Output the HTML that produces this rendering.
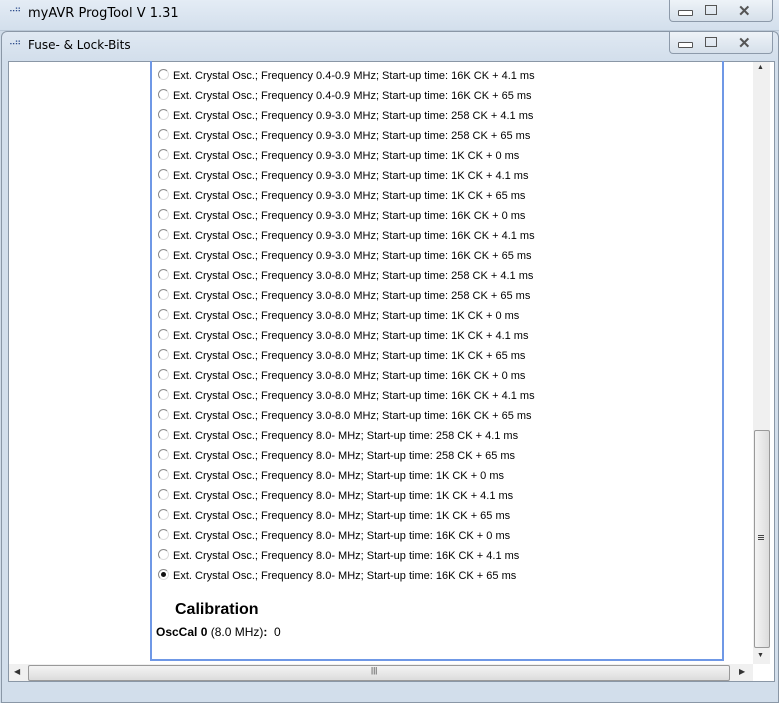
<!DOCTYPE html>
<html><head><style>
body{margin:0;width:779px;height:701px;overflow:hidden;background:#cfdbe8;font-family:"Liberation Sans",Arial,sans-serif;position:relative}
.t1{position:absolute;left:0;top:0;width:779px;height:30px;background:linear-gradient(#e4ecf5,#d3dfec);border-bottom:1px solid #b9c7d6}
.t2{position:absolute;left:1px;top:31px;width:776px;height:670px;background:linear-gradient(#dfe8f2 0,#d2deeb 30px,#d2deeb);border:1px solid #8a97a6;border-radius:6px 6px 0 0}
.title{position:absolute;font-size:13px;color:#000;font-family:"DejaVu Sans",sans-serif}
.btns{position:absolute;height:21px;border:1px solid #8d9aaa;border-top:none;border-radius:0 0 4px 4px;background:linear-gradient(#eef3f8,#d6e0ea)}
.client{position:absolute;left:8px;top:61px;width:767px;height:621px;background:#fff;border:1px solid #8a97a6;box-sizing:border-box}
.box{position:absolute;left:141px;top:-1px;width:574px;height:600px;border:2px solid #6f98e6;border-top:none;box-sizing:border-box}
.row{position:absolute;left:158px;font-size:11px;height:20px;line-height:20px;white-space:nowrap;color:#000}
.rad{display:inline-block;width:9px;height:9px;border-radius:50%;border:1px solid #8a8a8a;border-right-color:#ddd;border-bottom-color:#ddd;vertical-align:-1px;margin-right:4px;position:relative;background:#fff}
.rad.on::after{content:"";position:absolute;left:2px;top:2px;width:5px;height:5px;border-radius:50%;background:#111}
.vs{position:absolute;left:744px;top:0;width:17px;height:602px;background:#f0f0f0}
.hs{position:absolute;left:0;top:602px;width:744px;height:17px;background:#f0f0f0}
.g{position:absolute;left:5px;width:6px;height:1px;background:#444}
</style></head><body>
<div class="t1"></div>
<div class="title" style="left:9px;top:5px;font-size:9px;letter-spacing:-1px;color:#2a4a8a">⠤⠶</div>
<div class="title" style="left:28px;top:6px">myAVR ProgTool V 1.31</div>
<div class="btns" style="left:669px;top:0;width:102px"></div>
<div class="t2"></div>
<div class="title" style="left:9px;top:38px;font-size:9px;letter-spacing:-1px;color:#2a4a8a">⠤⠶</div>
<div class="title" style="left:28px;top:38px;font-size:12px">Fuse- &amp; Lock-Bits</div>
<div class="btns" style="left:669px;top:32px;width:102px"></div>
<div style="position:absolute;left:678px;top:10px;width:13px;height:4px;border:1px solid #555;border-radius:1px;background:#fff"></div>
<div style="position:absolute;left:705px;top:5px;width:10px;height:8px;border:1px solid #555;"></div>
<div style="position:absolute;left:738px;top:2px;font-size:15px;font-weight:bold;color:#555">✕</div>
<div style="position:absolute;left:678px;top:42px;width:13px;height:4px;border:1px solid #555;border-radius:1px;background:#fff"></div>
<div style="position:absolute;left:705px;top:37px;width:10px;height:8px;border:1px solid #555;"></div>
<div style="position:absolute;left:738px;top:34px;font-size:15px;font-weight:bold;color:#555">✕</div>
<div class="client">
<div class="box"></div>
<div class="vs"><div style="position:absolute;left:1px;top:368px;width:14px;height:216px;border:1px solid #999;border-radius:2px;background:linear-gradient(90deg,#f4f4f4,#dcdcdc)"></div>
<div class="g" style="top:473px"></div><div class="g" style="top:475px"></div><div class="g" style="top:477px"></div>
<div style="position:absolute;left:4px;top:2px;font-size:7px;color:#333">▲</div><div style="position:absolute;left:4px;top:590px;font-size:7px;color:#333">▼</div></div>
<div class="hs"><div style="position:absolute;left:19px;top:1px;width:700px;height:14px;border:1px solid #999;border-radius:2px;background:linear-gradient(#f4f4f4,#dcdcdc)"></div>
<div style="position:absolute;left:362px;top:2px;font-size:8px;color:#333">|||</div>
<div style="position:absolute;left:5px;top:3px;font-size:8px;color:#333">◀</div><div style="position:absolute;left:730px;top:3px;font-size:8px;color:#333">▶</div></div>
</div>
<div style="position:absolute;left:175px;top:601px;font-size:16px;font-weight:bold">Calibration</div>
<div style="position:absolute;left:156px;top:625px;font-size:12px"><b>OscCal 0</b> (8.0 MHz)<b>:</b>&nbsp; 0</div>
<div class="row" style="top:66px"><span class="rad"></span>Ext. Crystal Osc.; Frequency 0.4-0.9 MHz; Start-up time: 16K CK + 4.1 ms</div>
<div class="row" style="top:86px"><span class="rad"></span>Ext. Crystal Osc.; Frequency 0.4-0.9 MHz; Start-up time: 16K CK + 65 ms</div>
<div class="row" style="top:106px"><span class="rad"></span>Ext. Crystal Osc.; Frequency 0.9-3.0 MHz; Start-up time: 258 CK + 4.1 ms</div>
<div class="row" style="top:126px"><span class="rad"></span>Ext. Crystal Osc.; Frequency 0.9-3.0 MHz; Start-up time: 258 CK + 65 ms</div>
<div class="row" style="top:146px"><span class="rad"></span>Ext. Crystal Osc.; Frequency 0.9-3.0 MHz; Start-up time: 1K CK + 0 ms</div>
<div class="row" style="top:166px"><span class="rad"></span>Ext. Crystal Osc.; Frequency 0.9-3.0 MHz; Start-up time: 1K CK + 4.1 ms</div>
<div class="row" style="top:186px"><span class="rad"></span>Ext. Crystal Osc.; Frequency 0.9-3.0 MHz; Start-up time: 1K CK + 65 ms</div>
<div class="row" style="top:206px"><span class="rad"></span>Ext. Crystal Osc.; Frequency 0.9-3.0 MHz; Start-up time: 16K CK + 0 ms</div>
<div class="row" style="top:226px"><span class="rad"></span>Ext. Crystal Osc.; Frequency 0.9-3.0 MHz; Start-up time: 16K CK + 4.1 ms</div>
<div class="row" style="top:246px"><span class="rad"></span>Ext. Crystal Osc.; Frequency 0.9-3.0 MHz; Start-up time: 16K CK + 65 ms</div>
<div class="row" style="top:266px"><span class="rad"></span>Ext. Crystal Osc.; Frequency 3.0-8.0 MHz; Start-up time: 258 CK + 4.1 ms</div>
<div class="row" style="top:286px"><span class="rad"></span>Ext. Crystal Osc.; Frequency 3.0-8.0 MHz; Start-up time: 258 CK + 65 ms</div>
<div class="row" style="top:306px"><span class="rad"></span>Ext. Crystal Osc.; Frequency 3.0-8.0 MHz; Start-up time: 1K CK + 0 ms</div>
<div class="row" style="top:326px"><span class="rad"></span>Ext. Crystal Osc.; Frequency 3.0-8.0 MHz; Start-up time: 1K CK + 4.1 ms</div>
<div class="row" style="top:346px"><span class="rad"></span>Ext. Crystal Osc.; Frequency 3.0-8.0 MHz; Start-up time: 1K CK + 65 ms</div>
<div class="row" style="top:366px"><span class="rad"></span>Ext. Crystal Osc.; Frequency 3.0-8.0 MHz; Start-up time: 16K CK + 0 ms</div>
<div class="row" style="top:386px"><span class="rad"></span>Ext. Crystal Osc.; Frequency 3.0-8.0 MHz; Start-up time: 16K CK + 4.1 ms</div>
<div class="row" style="top:406px"><span class="rad"></span>Ext. Crystal Osc.; Frequency 3.0-8.0 MHz; Start-up time: 16K CK + 65 ms</div>
<div class="row" style="top:426px"><span class="rad"></span>Ext. Crystal Osc.; Frequency 8.0- MHz; Start-up time: 258 CK + 4.1 ms</div>
<div class="row" style="top:446px"><span class="rad"></span>Ext. Crystal Osc.; Frequency 8.0- MHz; Start-up time: 258 CK + 65 ms</div>
<div class="row" style="top:466px"><span class="rad"></span>Ext. Crystal Osc.; Frequency 8.0- MHz; Start-up time: 1K CK + 0 ms</div>
<div class="row" style="top:486px"><span class="rad"></span>Ext. Crystal Osc.; Frequency 8.0- MHz; Start-up time: 1K CK + 4.1 ms</div>
<div class="row" style="top:506px"><span class="rad"></span>Ext. Crystal Osc.; Frequency 8.0- MHz; Start-up time: 1K CK + 65 ms</div>
<div class="row" style="top:526px"><span class="rad"></span>Ext. Crystal Osc.; Frequency 8.0- MHz; Start-up time: 16K CK + 0 ms</div>
<div class="row" style="top:546px"><span class="rad"></span>Ext. Crystal Osc.; Frequency 8.0- MHz; Start-up time: 16K CK + 4.1 ms</div>
<div class="row" style="top:566px"><span class="rad on"></span>Ext. Crystal Osc.; Frequency 8.0- MHz; Start-up time: 16K CK + 65 ms</div>
</body></html>
